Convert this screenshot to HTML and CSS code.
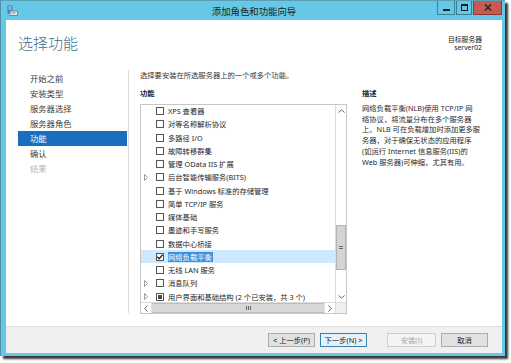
FILE: index.html
```html
<!DOCTYPE html>
<html lang="zh-CN">
<head>
<meta charset="utf-8">
<title>添加角色和功能向导</title>
<link rel="stylesheet" href="styles.css">
</head>
<body>
<div class="window">
  <div class="titlebar">
    <div class="tb-left">
      <svg class="app-icon" width="11" height="11" viewBox="0 0 11 11">
        <rect x="0.5" y="0.5" width="5" height="8" fill="#3d7fb8"/>
        <rect x="1.5" y="1.5" width="3" height="1" fill="#d9ecf7"/>
        <rect x="1.5" y="3.5" width="3" height="1" fill="#d9ecf7"/>
        <rect x="3" y="6" width="7.5" height="4.5" fill="#e8eef2" stroke="#6e8796" stroke-width="1"/>
        <rect x="4.5" y="7.5" width="4" height="1" fill="#6e8796"/>
      </svg>
    </div>
    <div class="tb-title">添加角色和功能向导</div>
    <div class="tb-controls">
      <div class="ctl ctl-min"><span class="glyph-min"></span></div>
      <div class="ctl ctl-max"><span class="glyph-max"></span></div>
      <div class="ctl ctl-close">
        <svg width="8" height="7" viewBox="0 0 8 7"><path d="M1 0.5 L7 6.5 M7 0.5 L1 6.5" stroke="#2a2a2a" stroke-width="1.6"/></svg>
      </div>
    </div>
  </div>

  <div class="client">
    <div class="header">
      <div class="page-title">选择功能</div>
      <div class="target">
        <div>目标服务器</div>
        <div>server02</div>
      </div>
    </div>

    <div class="main">
      <nav class="nav">
        <div class="nav-item">开始之前</div>
        <div class="nav-item">安装类型</div>
        <div class="nav-item">服务器选择</div>
        <div class="nav-item">服务器角色</div>
        <div class="nav-item active">功能</div>
        <div class="nav-item">确认</div>
        <div class="nav-item disabled">结果</div>
      </nav>

      <section class="content">
        <div class="intro">选择要安装在所选服务器上的一个或多个功能。</div>
        <div class="columns">
          <div class="features">
            <div class="col-head">功能</div>
            <div class="listbox">
              <div class="rows">
                <div class="rows-inner">
                  <div class="row"><span class="exp"></span><span class="cb"></span><span class="lbl">XPS 查看器</span></div>
                  <div class="row"><span class="exp"></span><span class="cb"></span><span class="lbl">对等名称解析协议</span></div>
                  <div class="row"><span class="exp"></span><span class="cb"></span><span class="lbl">多路径 I/O</span></div>
                  <div class="row"><span class="exp"></span><span class="cb"></span><span class="lbl">故障转移群集</span></div>
                  <div class="row"><span class="exp"></span><span class="cb"></span><span class="lbl">管理 OData IIS 扩展</span></div>
                  <div class="row"><span class="exp"><svg width="4" height="7" viewBox="0 0 4 7"><path d="M0.5 0.5 L3.5 3.5 L0.5 6.5 Z" fill="none" stroke="#9a9a9a" stroke-width="1"/></svg></span><span class="cb"></span><span class="lbl">后台智能传输服务(BITS)</span></div>
                  <div class="row"><span class="exp"></span><span class="cb"></span><span class="lbl">基于 Windows 标准的存储管理</span></div>
                  <div class="row"><span class="exp"></span><span class="cb"></span><span class="lbl">简单 TCP/IP 服务</span></div>
                  <div class="row"><span class="exp"></span><span class="cb"></span><span class="lbl">媒体基础</span></div>
                  <div class="row"><span class="exp"></span><span class="cb"></span><span class="lbl">墨迹和手写服务</span></div>
                  <div class="row"><span class="exp"></span><span class="cb"></span><span class="lbl">数据中心桥接</span></div>
                  <div class="row selected"><span class="exp"></span><span class="cb checked"><svg width="8" height="8" viewBox="0 0 8 8"><path d="M1.3 3.8 L3.1 5.7 L6.6 1.8" fill="none" stroke="#1e1e1e" stroke-width="1.3"/></svg></span><span class="lbl"><span class="sel-text">网络负载平衡</span></span></div>
                  <div class="row"><span class="exp"></span><span class="cb"></span><span class="lbl">无线 LAN 服务</span></div>
                  <div class="row"><span class="exp"><svg width="4" height="7" viewBox="0 0 4 7"><path d="M0.5 0.5 L3.5 3.5 L0.5 6.5 Z" fill="none" stroke="#9a9a9a" stroke-width="1"/></svg></span><span class="cb"></span><span class="lbl">消息队列</span></div>
                  <div class="row"><span class="exp"><svg width="4" height="7" viewBox="0 0 4 7"><path d="M0.5 0.5 L3.5 3.5 L0.5 6.5 Z" fill="none" stroke="#9a9a9a" stroke-width="1"/></svg></span><span class="cb partial"><span class="dot"></span></span><span class="lbl">用户界面和基础结构 (2 个已安装，共 3 个)</span></div>
                </div>
              </div>
              <div class="vscroll">
                <div class="sb-btn"><svg width="7" height="4" viewBox="0 0 7 4"><path d="M0.5 3.5 L3.5 0.8 L6.5 3.5" fill="none" stroke="#606060" stroke-width="1"/></svg></div>
                <div class="v-track">
                  <div class="v-thumb"><span class="grip-h"></span></div>
                </div>
                <div class="sb-btn"><svg width="7" height="4" viewBox="0 0 7 4"><path d="M0.5 0.5 L3.5 3.2 L6.5 0.5" fill="none" stroke="#606060" stroke-width="1"/></svg></div>
              </div>
              <div class="hscroll">
                <div class="sb-btn"><svg width="4" height="7" viewBox="0 0 4 7"><path d="M3.5 0.5 L0.8 3.5 L3.5 6.5" fill="none" stroke="#606060" stroke-width="1"/></svg></div>
                <div class="h-thumb"><span class="grip-v"></span></div>
                <div class="sb-btn"><svg width="4" height="7" viewBox="0 0 4 7"><path d="M0.5 0.5 L3.2 3.5 L0.5 6.5" fill="none" stroke="#606060" stroke-width="1"/></svg></div>
              </div>
              <div class="corner"></div>
            </div>
          </div>
          <div class="desc">
            <div class="col-head">描述</div>
            <p class="desc-text">网络负载平衡(NLB)使用 TCP/IP 网<br>络协议，将流量分布在多个服务器<br>上。NLB 可在负载增加时添加更多服<br>务器，对于确保无状态的应用程序<br>(如运行 Internet 信息服务(IIS)的<br>Web 服务器)可伸缩，尤其有用。</p>
          </div>
        </div>
      </section>
    </div>

    <div class="footer">
      <button class="btn">&lt; 上一步(P)</button>
      <button class="btn focused">下一步(N) &gt;</button>
      <button class="btn disabled gap">安装(I)</button>
      <button class="btn">取消</button>
    </div>
  </div>
</div>
</body>
</html>
```

FILE: styles.css
```css
html, body {
  margin: 0;
  padding: 0;
  background: #ffffff;
}
body {
  width: 511px;
  height: 363px;
  overflow: hidden;
  font-family: "Noto Sans", "Noto Sans CJK SC", sans-serif;
  color: #333;
}
.window {
  width: 505px;
  height: 356px;
  box-sizing: border-box;
  background: #64c8e6;
  border-left: 1px solid #4e8ea6;
  border-top: 1px solid #5d9db4;
  padding: 0 3px 3px 5px;
  display: flex;
  flex-direction: column;
  box-shadow: 3px 3px 2px rgba(20, 20, 20, 0.85);
}
.titlebar {
  height: 19px;
  flex: none;
  display: grid;
  grid-template-columns: 1fr auto 1fr;
  align-items: center;
}
.tb-left {
  display: flex;
  align-items: center;
  padding-left: 1px;
}
.app-icon { display: block; }
.tb-title {
  font-family: "Noto Sans CJK SC", sans-serif;
  font-size: 9.4px;
  line-height: 12px;
  color: #1e1e1e;
  margin-top: 1px;
}
.tb-controls {
  display: flex;
  justify-content: flex-end;
  align-self: start;
  gap: 1px;
}
.ctl {
  height: 14px;
  box-sizing: border-box;
  border: 1px solid #3c7f97;
  border-top: none;
  display: flex;
  align-items: center;
  justify-content: center;
}
.ctl-min { width: 18px; }
.ctl-max { width: 16px; }
.ctl-close {
  width: 29px;
  background: #c75a50;
  border-color: #8a3a34;
}
.glyph-min {
  width: 7px;
  height: 2px;
  background: #1e1e1e;
  margin-top: 4px;
}
.glyph-max {
  width: 5px;
  height: 4px;
  border: 1px solid #1e1e1e;
  border-top-width: 2px;
}

.client {
  flex: 1;
  background: #ffffff;
  display: flex;
  flex-direction: column;
  min-height: 0;
}
.header {
  height: 50px;
  flex: none;
  box-sizing: border-box;
  padding: 13px 20px 0 12px;
  display: flex;
  justify-content: space-between;
  align-items: flex-start;
}
.page-title {
  font-family: "Noto Sans CJK SC", sans-serif;
  font-size: 15px;
  line-height: 20px;
  color: #3f6f8d;
  font-weight: 300;
}
.target {
  margin-top: 3px;
  text-align: right;
  font-size: 6.8px;
  line-height: 8px;
  color: #222;
}

.main {
  flex: 1;
  display: flex;
  min-height: 0;
}
.nav {
  width: 123px;
  flex: none;
  box-sizing: border-box;
  padding: 1px 1px 0 12px;
  margin-bottom: 13px;
  border-right: 1px solid #dcdcdc;
}
.nav-item {
  height: 15px;
  line-height: 15px;
  padding-left: 12px;
  font-family: "Noto Sans CJK SC", sans-serif;
  font-size: 8.3px;
  color: #3c3c3c;
}
.nav-item.active {
  background: #1b6ebd;
  color: #ffffff;
}
.nav-item.disabled {
  color: #b4b4b4;
}

.content {
  margin-left: 11px;
  font-size: 7.3px;
}
.intro {
  line-height: 10px;
  color: #333;
}
.columns {
  display: flex;
  margin-top: 8px;
}
.col-head {
  line-height: 10px;
  font-weight: 700;
  color: #222;
}
.features {
  width: 207px;
}
.listbox {
  margin-top: 6px;
  width: 207px;
  height: 210px;
  box-sizing: border-box;
  border: 1px solid #c6c6c6;
  display: grid;
  grid-template-columns: 1fr 11px;
  grid-template-rows: 1fr 11px;
}
.rows {
  overflow: hidden;
  min-height: 0;
}
.rows-inner {
  margin-top: -0.6px;
}
.row {
  height: 13.26px;
  display: flex;
  align-items: center;
  white-space: nowrap;
}
.row.selected {
  background: #cde8ff;
}
.exp {
  width: 15px;
  flex: none;
  display: flex;
  align-items: center;
  padding-left: 3px;
  box-sizing: border-box;
}
.exp svg { display: block; }
.cb {
  width: 8px;
  height: 8px;
  flex: none;
  box-sizing: border-box;
  border: 1px solid #555;
  background: #fff;
  position: relative;
}
.cb svg {
  position: absolute;
  left: -1px;
  top: -1px;
}
.cb.partial {
  display: flex;
  align-items: center;
  justify-content: center;
}
.cb .dot {
  width: 4px;
  height: 4px;
  background: #4a4a4a;
}
.lbl {
  margin-left: 4px;
  color: #262626;
  line-height: 10px;
}
.sel-text {
  background: #3d8fe2;
  color: #ffffff;
  padding: 0 1px 0 0;
}

.vscroll {
  border-left: 1px solid #dcdcdc;
  display: flex;
  flex-direction: column;
  min-height: 0;
}
.sb-btn {
  width: 10px;
  height: 11px;
  flex: none;
  display: flex;
  align-items: center;
  justify-content: center;
  background: #fff;
}
.vscroll .sb-btn { width: 10px; }
.v-track {
  flex: 1;
  display: flex;
  flex-direction: column;
}
.v-thumb {
  margin-top: 109px;
  height: 45px;
  box-sizing: border-box;
  background: #d4d4d4;
  border: 1px solid #b4b4b4;
  display: flex;
  align-items: center;
  justify-content: center;
}
.grip-h {
  width: 4px;
  height: 4px;
  background: repeating-linear-gradient(to bottom, #666 0 1px, transparent 1px 2px);
}
.hscroll {
  border-top: 1px solid #dcdcdc;
  display: flex;
  align-items: stretch;
}
.hscroll .sb-btn {
  width: 11px;
  height: 10px;
  border-right: 1px solid #e0e0e0;
  box-sizing: border-box;
}
.hscroll .sb-btn:last-child {
  border-right: none;
  border-left: 1px solid #e0e0e0;
}
.h-thumb {
  flex: 1;
  background: #d8d8d8;
  border: 1px solid #bdbdbd;
  border-left: none;
  border-right: none;
  display: flex;
  align-items: center;
  justify-content: flex-end;
  padding-right: 73px;
}
.grip-v {
  width: 5px;
  height: 4px;
  background: repeating-linear-gradient(to right, #666 0 1px, transparent 1px 2px);
}
.corner {
  background: #f0f0f0;
  border-top: 1px solid #dcdcdc;
  border-left: 1px solid #dcdcdc;
}

.desc {
  margin-left: 15px;
  width: 135px;
}
.desc-text {
  margin: 5px 0 0;
  line-height: 10.7px;
  white-space: nowrap;
  color: #2a2a2a;
}

.footer {
  height: 27px;
  flex: none;
  box-sizing: border-box;
  background: #f0f0f0;
  border-top: 1px solid #dfdfdf;
  padding: 6px 14px 0 0;
  display: flex;
  justify-content: flex-end;
  align-items: flex-start;
  gap: 5px;
}
.btn {
  width: 47px;
  height: 14px;
  box-sizing: border-box;
  margin: 0;
  padding: 0;
  border: 1px solid #adadad;
  background: #e1e1e1;
  font-family: "Noto Sans", "Noto Sans CJK SC", sans-serif;
  font-size: 7.3px;
  line-height: 12px;
  color: #222;
  white-space: nowrap;
}
.btn.focused {
  border-color: #3c7fb1;
  background: #e5f1fb;
}
.btn.disabled {
  background: #f4f4f4;
  border-color: #cfcfcf;
  color: #a6a6a6;
  width: 49px;
}
.btn.gap {
  margin-left: 15px;
}
```
